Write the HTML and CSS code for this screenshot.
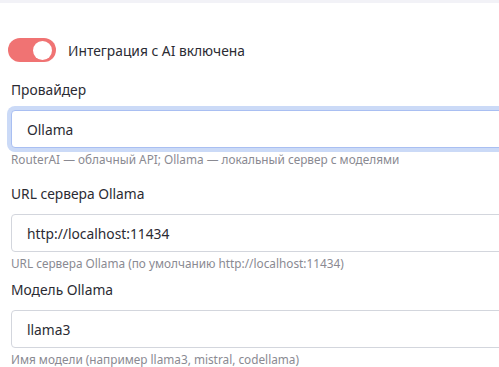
FILE: index.html
```html
<!DOCTYPE html>
<html lang="ru">
<head>
    <meta charset="UTF-8">
    <meta name="viewport" content="width=device-width, initial-scale=1.0">
    <title>Настройки AI</title>
    <link rel="stylesheet" href="styles.css">
</head>
<body>

    <div class="topbar"></div>

    <div class="panel">
        <label class="switch-row">
            <span class="switch"><span class="knob"></span></span>
            <span class="switch-text">Интеграция с AI включена</span>
        </label>

        <div class="field">
            <label for="provider">Провайдер</label>
            <input type="text" id="provider" class="focused" value="Ollama">
            <p class="hint">RouterAI — облачный API; Ollama — локальный сервер с моделями</p>
        </div>

        <div class="ollama">
            <div class="field">
                <label for="url">URL сервера Ollama</label>
                <input type="text" id="url" value="http://localhost:11434">
                <p class="hint">URL сервера Ollama (по умолчанию http://localhost:11434)</p>
            </div>

            <div class="field">
                <label for="model">Модель Ollama</label>
                <input type="text" id="model" value="llama3">
                <p class="hint">Имя модели (например llama3, mistral, codellama)</p>
            </div>
        </div>
    </div>

</body>
</html>
```

FILE: styles.css
```css
body {
    margin: 0;
    font-family: "Noto Sans", "Open Sans", sans-serif;
    color: #2b2b33;
    background: white;
    overflow: hidden;
}
.topbar {
    height: 3px;
    background-color: #f2f2f7;
}
.panel {
    padding: 35px 0 0 11px;
    margin-right: -40px;
}
.switch-row {
    display: flex;
    align-items: center;
    gap: 12px;
    margin-left: -3px;
    height: 24px;
}
.switch {
    width: 48px;
    height: 24px;
    border-radius: 12px;
    background-color: #f07373;
    position: relative;
}
.knob {
    position: absolute;
    right: 4px;
    top: 2.5px;
    width: 19px;
    height: 19px;
    border-radius: 50%;
    background: white;
}
.switch-text {
    font-size: 13.8px;
}
.field {
    margin-top: 18px;
}
.field label {
    display: block;
    font-size: 13.8px;
    line-height: 20px;
    margin-bottom: 10px;
}
.field input {
    display: block;
    width: 100%;
    height: 38px;
    box-sizing: border-box;
    padding: 0 15px;
    border: 1px solid #d3d6dd;
    border-radius: 4px;
    font-family: inherit;
    font-size: 13.8px;
    color: #2b2b33;
    outline: none;
}
.field input.focused {
    border-color: #a9bff2;
    box-shadow: 0 0 0 4px #cbdaf7;
}
.hint {
    margin: 4px 0 0;
    font-size: 11.8px;
    line-height: 15px;
    color: #8a8a92;
}
.ollama {
    margin-top: 17px;
}
.ollama .field {
    margin-top: 9px;
}
```
